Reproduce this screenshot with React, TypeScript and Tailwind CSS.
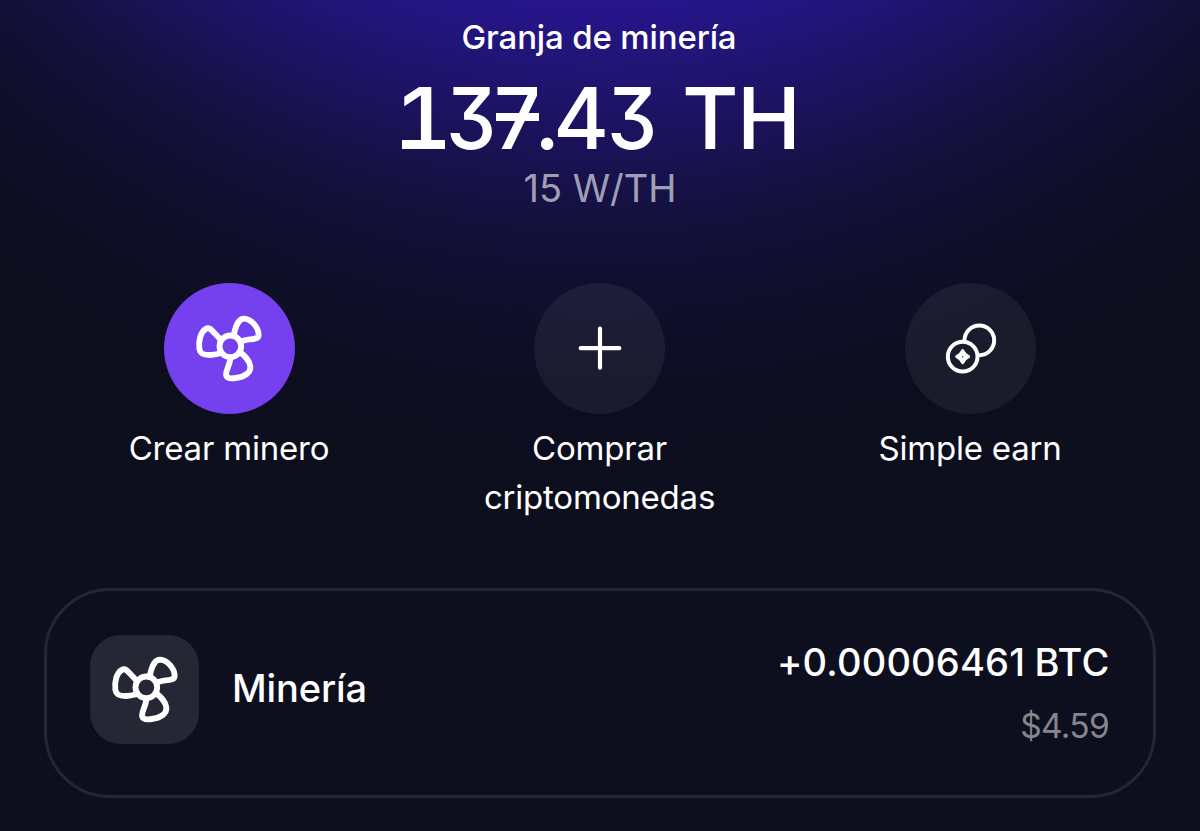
import React from "react";

function FanIcon() {
  return (
    <svg
      className="size-18 shrink-0"
      viewBox="130 128 216 216"
      fill="none"
      stroke="white"
      strokeWidth="17.5"
      strokeLinecap="round"
      strokeLinejoin="round"
    >
      <circle cx="242" cy="228" r="32.5" />
      <path d="M252 197C257 166 268 145 283 145C305 146 327 172 327 193C327 205 314 206 300 207C290 208 284 210 276 213" />
      <path d="M214 209L192 186C184 176 176 171 168 176C153 185 146 210 149 235C151 250 160 254 180 254C194 254 202 252 211 249" />
      <path d="M242 266C239 288 228 300 229 313C231 325 245 325 258 323C285 320 304 307 302 288C300 270 286 258 272 246" />
    </svg>
  );
}

function CoinsIcon() {
  return (
    <svg
      className="size-18"
      viewBox="132 127 216 216"
      fill="none"
      stroke="white"
      strokeWidth="12"
      strokeLinecap="round"
      strokeLinejoin="round"
    >
      <path d="M223.5 209A44.5 44.5 0 1 1 268 253.500" />
      <circle cx="218" cy="258" r="44.500" />
      <path
        strokeWidth="9"
        d="M218 240C222 249 227 254 236 258C227 262 222 267 218 276C214 267 209 262 200 258C209 254 214 249 218 240Z"
        fill="white"
      />
      <circle cx="218" cy="258" r="2" fill="#1a1a2c" stroke="none" />
    </svg>
  );
}

function PlusIcon() {
  return (
    <svg
      className="size-18"
      viewBox="132 129 216 216"
      fill="none"
      stroke="white"
      strokeWidth="12.5"
      strokeLinecap="round"
    >
      <path d="M240 176V293M182 234.500H298" />
    </svg>
  );
}

type ActionProps = {
  label: string;
  primary?: boolean;
  children: React.ReactNode;
};

function Action({ label, primary, children }: ActionProps) {
  return (
    <button className="flex w-[262px] flex-col items-center">
      <span
        className={
          primary
            ? "flex size-[131px] items-center justify-center rounded-full bg-[#7540ee]"
            : "flex size-[131px] items-center justify-center rounded-full bg-white/[0.06]"
        }
      >
        {children}
      </span>
      <span className="mt-[10px] text-center text-[33px] leading-[49px] tracking-[-0.2px] text-white">
        {label}
      </span>
    </button>
  );
}

export default function App() {
  return (
    <main className="flex h-[831px] w-[1200px] flex-col overflow-hidden bg-[#0d0f1e] bg-[radial-gradient(circle_at_600px_-600px,#281592_590px,#26148a_610px,#211578_660px,#1c1364_715px,#18124f_770px,#14113f_815px,#110f33_870px,#0f0e29_930px,#0c0d1e_1030px,#0d0f1e_1150px)] font-['Inter',sans-serif] text-white">
      <header className="flex flex-col items-center">
        <h1 className="mt-[12px] pr-[2px] text-[33px] leading-[50px] font-medium tracking-[-0.15px]">
          Granja de minería
        </h1>
        <p className="mt-[7px] flex h-[100px] w-[400px] items-center text-[85px] leading-[100px] font-[540] [font-feature-settings:'cv09']">
          <span className="relative w-[47px]">
            <span className="inline-block origin-left scale-x-[1.1]">1</span>
            <span className="absolute bottom-[20px] left-[2px] h-[9px] w-[43px] bg-white" />
          </span>
          <span className="w-[48px] origin-left scale-x-[0.94]">3</span>
          <span className="relative w-[40px]">
            <span className="inline-block origin-left scale-x-[0.96]">7</span>
            <span className="absolute top-[44px] left-[2px] h-[8px] w-[43px] bg-white" />
          </span>
          <span className="w-[19px]">.</span>
          <span className="w-[54px]">4</span>
          <span className="w-[76px] origin-left scale-x-[0.94]">3</span>
          <span className="w-[55px] origin-left scale-x-[1.02]">T</span>
          <span className="origin-left scale-x-[1.01]">H</span>
        </p>
        <p className="text-[38px] leading-[38px] text-white/60">15 W/TH</p>
      </header>

      <nav className="mt-[76px] flex gap-[108.500px] pl-[98px]">
        <Action label="Crear minero" primary>
          <FanIcon />
        </Action>
        <Action label="Comprar criptomonedas">
          <PlusIcon />
        </Action>
        <Action label="Simple earn">
          <CoinsIcon />
        </Action>
      </nav>

      <section className="mx-[44px] mt-[66px] flex h-[210px] items-center rounded-[66px] border-[3px] border-[#242634] px-[43px]">
        <div className="mb-[8px] flex size-[109px] items-center justify-center rounded-[31px] bg-[#252735] pt-px pl-px">
          <FanIcon />
        </div>
        <h2 className="mb-[10px] ml-[33px] text-[38px] leading-[48px] font-medium tracking-[-0.1px]">
          Minería
        </h2>
        <div className="mt-[2px] ml-auto text-right">
          <p className="pr-[0.5px] text-[38px] leading-[64px] font-[480] tracking-[0.2px] [word-spacing:-1px]">
            +0.00006461 BTC
          </p>
          <p className="pr-[1px] text-[33.500px] leading-[65px] tracking-[-0.7px] text-[#84858e]">
            $4.59
          </p>
        </div>
      </section>
    </main>
  );
}
